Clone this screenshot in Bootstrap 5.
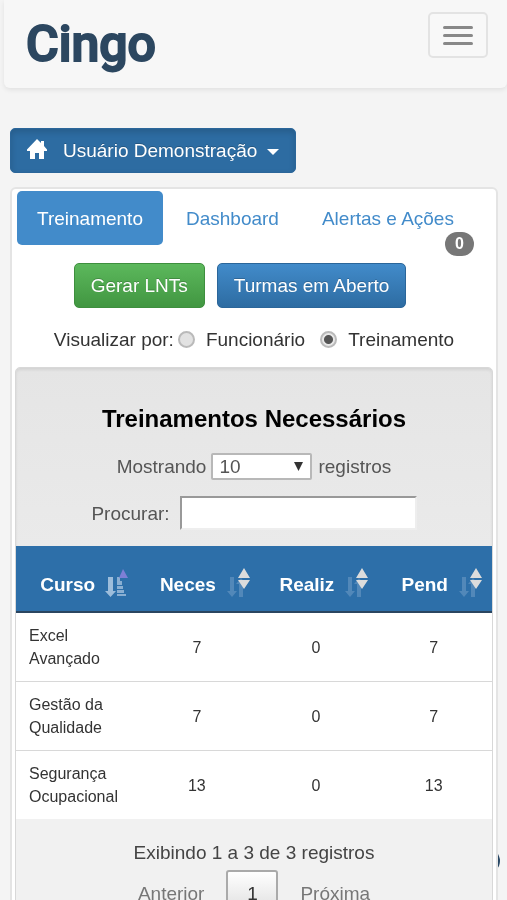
<!DOCTYPE html>
<html lang="pt-br">
<head>
<meta charset="utf-8">
<meta name="viewport" content="width=device-width, initial-scale=1">
<title>Cingo - Treinamento</title>
<link href="https://cdn.jsdelivr.net/npm/bootstrap@5.3.0/dist/css/bootstrap.min.css" rel="stylesheet">
<style>
body{font-family:"Liberation Sans",Arial,sans-serif;font-size:19px;line-height:27px;background:#f4f4f4;color:#333;height:100vh;overflow:hidden}
.topbar{background:#f7f7f7;border-radius:0 0 6px 6px;box-shadow:0 2px 5px rgba(0,0,0,.08);padding:12px 19px 21px 22px;margin-left:4px}
.wordmark{font-family:Roboto,sans-serif;font-weight:500;font-size:50px;line-height:45px;color:#2c4760;-webkit-text-stroke:2px #2c4760;padding:10px 0 0}
.wordmark:hover{color:#2c4760}
.menu-toggle{width:60px;height:46px;border:2px solid #e3e3e3;border-radius:5px;background:#f8f8f8;padding:0;gap:5px}
.menu-toggle span{display:block;width:30px;height:3px;border-radius:2px;background:#888}
.btn{font-size:19px;line-height:27px;padding:8px 16px;border-radius:5px;text-shadow:0 -1px 0 rgba(0,0,0,.2);color:#fff}
.btn:hover{color:#fff}
.btn-user{background:#2d6ca2;border-color:#2b669a;box-shadow:inset 0 3px 6px rgba(0,0,0,.15);margin:40px 0 14px 10px}
.btn-user::after{margin-left:10px;vertical-align:2px;border-width:6px 6px 0}
.btn-user svg{vertical-align:-2px}
.btn-lnt{background:linear-gradient(#5cb85c,#419641);border-color:#3e8f3e}
.btn-open{background:linear-gradient(#428bca,#2d6ca2);border-color:#2b669a}
.panel-main{background:#fff;border:2px solid #e4e4e4;border-radius:6px;margin:0 9px 0 10px;padding:2px 3px}
.tabs{gap:3px;padding-left:2px}
.tabs .nav-link{padding:14px 20px 13px;border-radius:5px;color:#428bca;line-height:27px}
.tabs .nav-link.active{background:#428bca;color:#fff}
.alert-count{position:absolute;right:0;bottom:-11px;background:#777;font-size:16px;line-height:16px;padding:4px 10px;border-radius:12px}
.actions{margin-top:18px;padding-right:28px}
.view-by{margin:18px 0 14px;color:#333}
.view-by input{appearance:none;width:17px;height:17px;border:2px solid #bababa;border-radius:50%;background:#e2e2e2;margin:0 11px 0 4px}
.view-by input:checked{background:radial-gradient(circle,#555 0 4px,#e8e8e8 5px)}
.view-by label+input{margin-left:15px}
.widget{border:1px solid #d8d8d8;border-radius:5px;background:#f1f1f1}
.widget-head{background:linear-gradient(#e5e5e5,#eaeaea);color:#555;padding:35px 0 16px;border-radius:4px 4px 0 0;box-shadow:inset 0 2px 3px rgba(0,0,0,.08)}
.widget-head h1{font-size:24px;line-height:32px;font-weight:700;color:#000;margin:0 0 18px}
.length-pick{width:101px;height:27px;font-size:19px;line-height:23px;padding:0 6px;border:2px solid #b8b8b8;border-radius:2px;color:#555;margin:0 6px 0 5px;background-position:right 6px center;background-size:11px 11px;--bs-form-select-bg-img:url("data:image/svg+xml,%3Csvg xmlns='http://www.w3.org/2000/svg' viewBox='0 0 11 11'%3E%3Cpath d='M1 1h9L5.5 10z' fill='%23333'/%3E%3C/svg%3E")}
.search-box{width:237px;height:34px;border:2px solid;border-color:#999 #eee #eee #999;background:#fff;margin-left:10px;padding:0 6px}
.courses{margin:0;font-size:16px;line-height:23px;table-layout:fixed;--bs-table-bg:#fff;--bs-table-color:#333}
.courses th{background:#2d6fa9;color:#fff;font-size:19px;line-height:27px;padding:25px 0 13px 16px;border-bottom:2px solid #2a4560}
.courses td{padding:11px 0;border-bottom:1px solid #d8d8d8;vertical-align:middle;text-align:center;color:#333}
.courses td:first-child{text-align:left;padding-left:13px}
.courses tbody tr:last-child td{border-bottom-color:#f1f1f1}
.courses svg{width:24px;height:30px;margin:-10px 0 -4px 10px;vertical-align:middle}
.c-a{width:25.5%}.c-b{width:25%}.c-d{width:24.5%}
.widget-foot{color:#444;padding:19px 0 20px}
.page-btn{border:0;background:none;color:#777;font-size:19px;line-height:27px;padding:8px 22px}
.page-btn.current{border:2px solid #aaa;border-radius:3px;background:linear-gradient(#fff,#dcdcdc);color:#333;padding:8px 18px;width:52px}
.float-dot{position:fixed;right:7px;bottom:27px;width:24px;height:24px;border:0;border-radius:50%;background:#294865;z-index:-1}
</style>
<script src="https://cdn.jsdelivr.net/npm/bootstrap@5.3.0/dist/js/bootstrap.bundle.min.js"></script>
</head>
<body>
<svg class="d-none" xmlns="http://www.w3.org/2000/svg">
<symbol id="sort-asc" viewBox="0 0 24 30">
<path d="M3 9h5v14h3l-5.500 6L0 23h3z" fill="#9dbddb"/>
<path d="M12 9h3v4h-3zM12 13h5v4h-5zM12 18h6v3h-6zM12 22h7v3h-7zM12 26h9v2h-9z" fill="#8aafd2"/>
<path d="M18 1l5 9h-9z" fill="#7d7fd6"/>
</symbol>
<symbol id="sort-both" viewBox="0 0 24 30">
<path d="M4 9h4v14h3l-5 6-5-6h3zM13 29V16h-3l5-6 5 6h-3v13z" fill="#5288b9"/>
<path d="M18 0l6 10H12zM12 12h12l-6 9z" fill="#dcdcdc"/>
</symbol>
</svg>
<nav class="topbar d-flex justify-content-between align-items-start" aria-label="Principal">
<a class="navbar-brand wordmark m-0" href="#">Cingo</a>
<button class="menu-toggle d-flex flex-column align-items-center justify-content-center" type="button" aria-label="Menu"><span></span><span></span><span></span></button>
</nav>
<button class="btn btn-user dropdown-toggle" type="button"><svg class="me-3" width="20" height="20" viewBox="0 0 20 20" fill="#fff" aria-hidden="true"><path d="M10 0l4 4V2h3v5l3 3.500V12h-3v8h-5v-6H8v6H3v-8H0v-1.500z"/></svg>Usuário Demonstração</button>
<main class="panel-main">
<ul class="nav nav-pills tabs flex-nowrap text-nowrap">
<li class="nav-item"><a class="nav-link active" href="#" aria-current="page">Treinamento</a></li>
<li class="nav-item"><a class="nav-link" href="#">Dashboard</a></li>
<li class="nav-item"><a class="nav-link position-relative" href="#">Alertas e Ações<span class="badge alert-count">0</span></a></li>
</ul>
<div class="actions d-flex justify-content-center">
<button class="btn btn-lnt me-2" type="button">Gerar LNTs</button>
<button class="btn btn-open ms-1" type="button">Turmas em Aberto</button>
</div>
<div class="view-by d-flex justify-content-center align-items-center" role="radiogroup" aria-labelledby="by">
<span id="by">Visualizar por:</span><input type="radio" name="v" id="vf"><label for="vf">Funcionário</label><input type="radio" name="v" id="vt" checked><label for="vt">Treinamento</label>
</div>
<section class="widget">
<div class="widget-head">
<h1 class="text-center">Treinamentos Necessários</h1>
<div class="d-flex justify-content-center align-items-center"><label for="len">Mostrando</label><select class="form-select length-pick" id="len"><option>10</option><option>25</option></select><span>registros</span></div>
<div class="d-flex justify-content-center align-items-center mt-3"><label for="q">Procurar:</label><input class="search-box" type="search" id="q"></div>
</div>
<table class="table courses">
<thead><tr class="text-center text-nowrap">
<th class="c-a" scope="col">Curso<svg aria-hidden="true"><use href="#sort-asc"/></svg></th>
<th class="c-b" scope="col">Neces<svg aria-hidden="true"><use href="#sort-both"/></svg></th>
<th class="c-b" scope="col">Realiz<svg aria-hidden="true"><use href="#sort-both"/></svg></th>
<th class="c-d" scope="col">Pend<svg aria-hidden="true"><use href="#sort-both"/></svg></th>
</tr></thead>
<tbody>
<tr><td>Excel<br>Avançado</td><td>7</td><td>0</td><td>7</td></tr>
<tr><td>Gestão da<br>Qualidade</td><td>7</td><td>0</td><td>7</td></tr>
<tr><td>Segurança<br>Ocupacional</td><td>13</td><td>0</td><td>13</td></tr>
</tbody>
</table>
<div class="widget-foot text-center">
<div>Exibindo 1 a 3 de 3 registros</div>
<div class="d-flex justify-content-center mt-1"><button class="page-btn" type="button">Anterior</button><button class="page-btn current" type="button">1</button><button class="page-btn" type="button">Próxima</button></div>
</div>
</section>
</main>
<button class="float-dot" type="button" aria-label="Ajuda"></button>
</body>
</html>
